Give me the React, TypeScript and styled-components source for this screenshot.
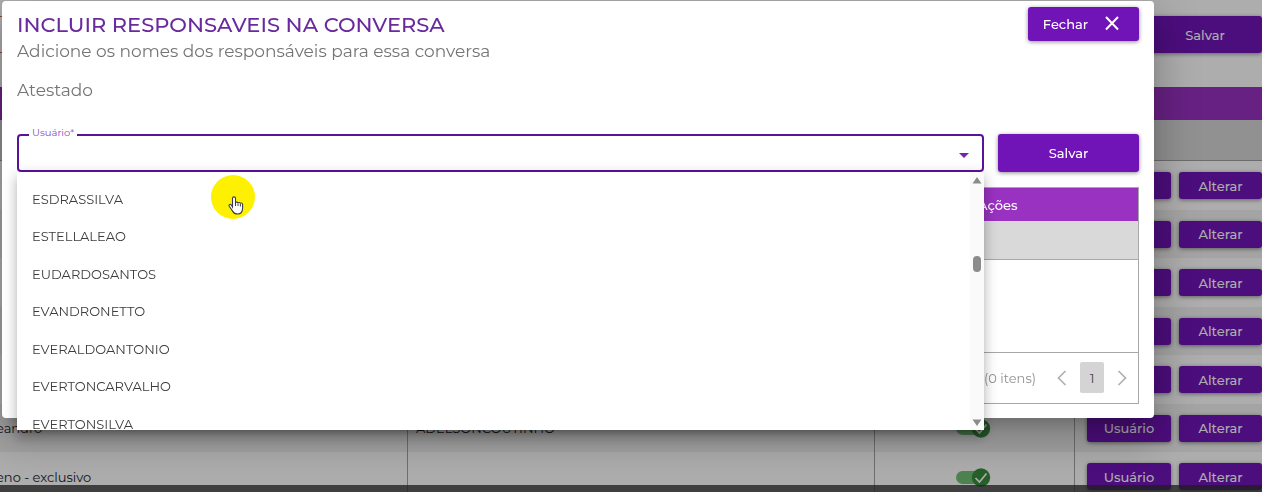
import React from "react";
import styled, { createGlobalStyle } from "styled-components";

const purple = "#7014b8";
const violet = "#9932c1";

const GlobalStyle = createGlobalStyle`
  *, *::before, *::after { box-sizing: border-box; }
  html, body { margin: 0; padding: 0; overflow: hidden; }
  body { background: #fff; }
  body, button, input { font-family: Montserrat, Inter, "Open Sans", sans-serif; }
`;

/* ---------- page behind the dialog ---------- */

const Page = styled.main`
  min-height: 100vh;
  overflow: hidden;
  color: #22222c;
`;

const FormBar = styled.div`
  display: flex;
  justify-content: space-between;
  align-items: flex-start;
  height: 87px;
  padding-top: 16px;
`;

const PageField = styled.input`
  width: 50%;
  height: 37px;
  border: 1px solid #e05a44;
  border-left: 0;
  background: #fff;
`;

const Button = styled.button<{ $width: number; $height: number }>`
  display: inline-flex;
  align-items: center;
  justify-content: center;
  flex: none;
  width: ${(p) => p.$width}px;
  height: ${(p) => p.$height}px;
  padding: 0;
  border: 0;
  border-radius: 3px;
  background: ${purple};
  color: #fff;
  font-size: 13px;
  font-weight: 500;
  line-height: 20px;
  box-shadow: 0 1px 4px rgba(0, 0, 0, 0.45);
  cursor: pointer;
`;

const PageTable = styled.table`
  width: 100%;
  table-layout: fixed;
  border-collapse: separate;
  border-spacing: 0;
  font-size: 13px;
  line-height: 20px;

  th { height: 33px; padding: 0; background: ${violet}; }
  thead tr + tr th { height: 41px; background: #d6d6d6; border-bottom: 1px solid #a0a0a0; }
  td { height: 49px; padding: 0; border-right: 1px solid #a4a4a4; white-space: nowrap; overflow: hidden; }
  tbody tr:nth-child(even) td { height: 48px; background: #f2f2f2; }
  td:first-child { text-indent: -4px; }
  td:nth-child(2) { padding-left: 8px; }
  td:last-child { border-right: 0; padding-left: 12px; }
`;

const RowActions = styled.div`
  display: flex;
  gap: 8px;
`;

const Switch = styled.label`
  display: flex;
  justify-content: center;
  margin-right: 2px;

  input { position: absolute; opacity: 0; }
  svg { display: block; }
`;

const Backdrop = styled.div`
  position: fixed;
  inset: 0;
  background: rgba(0, 0, 0, 0.32);
`;

const BottomBar = styled.div`
  position: fixed;
  inset: auto 0 0 0;
  height: 7px;
  background: rgba(32, 32, 32, 0.78);
`;

/* ---------- dialog ---------- */

const DialogLayer = styled.div`
  position: fixed;
  inset: 0;
  display: flex;
  align-items: flex-start;
  padding: 1px 108px 0 2px;
`;

const Dialog = styled.section`
  flex: 1;
  min-width: 0;
  padding: 6px 15px 14px;
  border-radius: 4px;
  background: #fff;
  box-shadow: 0 11px 15px -7px rgba(0, 0, 0, 0.2), 0 24px 38px 3px rgba(0, 0, 0, 0.14),
    0 9px 46px 8px rgba(0, 0, 0, 0.12);
`;

const DialogHeader = styled.header`
  display: flex;
  justify-content: space-between;
  align-items: flex-start;
`;

const Title = styled.h1`
  margin: 2px 0 0;
  color: #6a2a9e;
  font-size: 21px;
  font-weight: 500;
  line-height: 32px;
`;

const Subtitle = styled.p`
  margin: 0;
  color: #757575;
  font-size: 17px;
  line-height: 20px;
`;

const Topic = styled(Subtitle)`
  margin-top: 19px;
`;

const CloseButton = styled(Button)`
  gap: 16px;
  padding-right: 4px;
`;

const FormRow = styled.form`
  display: flex;
  gap: 14px;
  margin-top: 34px;
`;

const SelectField = styled.div`
  position: relative;
  flex: 1;
  min-width: 0;

  label {
    position: absolute;
    top: -8px;
    left: 12px;
    padding: 0 3px;
    background: #fff;
    color: #8a4cc2;
    font-size: 10px;
    line-height: 14px;
  }
  > svg { position: absolute; top: 19px; right: 15px; }
`;

const SelectInput = styled.input`
  display: block;
  width: 100%;
  height: 38px;
  padding: 0 40px 0 14px;
  border: 2px solid #5c1199;
  border-radius: 4px;
  outline: 0;
  background: #fff;
  font-size: 13px;
`;

const Panel = styled.div`
  position: absolute;
  top: 38px;
  left: 0;
  right: 0;
  z-index: 2;
  display: flex;
  height: 258px;
  overflow: hidden;
  background: #fff;
`;

const PanelShadow = styled.div`
  position: absolute;
  top: 38px;
  left: 0;
  right: 0;
  z-index: 1;
  height: 258px;
  box-shadow: 0 5px 5px -3px rgba(0, 0, 0, 0.2), 0 8px 10px 1px rgba(0, 0, 0, 0.14),
    0 3px 14px 2px rgba(0, 0, 0, 0.12);
`;

const Options = styled.ul`
  flex: 1;
  margin: 0;
  padding: 8px 0 0;
  list-style: none;
`;

const Option = styled.li`
  display: flex;
  align-items: center;
  height: 37px;
  padding-left: 15px;
  color: #3c3c3c;
  font-size: 13px;
  line-height: 20px;

  &:nth-child(even) { height: 38px; }
`;

const ScrollTrack = styled.div`
  display: flex;
  flex-direction: column;
  align-items: center;
  width: 14px;
  padding: 5px 0 4px;
  background: #fafafa;

  svg:last-child { margin-top: auto; }
`;

const ScrollThumb = styled.div`
  width: 8px;
  height: 16px;
  margin-top: 72px;
  border-radius: 4px;
  background: #8b8b8b;
`;

const Grid = styled.div`
  margin-top: 15px;
  border: 1px solid #a8a8a8;
`;

const GridTable = styled.table`
  width: 100%;
  table-layout: fixed;
  border-collapse: collapse;

  th {
    height: 33px;
    padding: 0;
    background: ${violet};
    color: #fff;
    font-size: 13px;
    font-weight: 500;
    text-align: left;
  }
  thead tr + tr th { height: 38px; background: #d9d9d9; border-bottom: 1px solid #a8a8a8; }
  td { height: 93px; border-bottom: 1px solid #a8a8a8; }
`;

const Pager = styled.nav`
  display: flex;
  align-items: center;
  justify-content: flex-end;
  height: 50px;
  padding-right: 4px;
  color: #929292;
  font-size: 13px;
  line-height: 20px;
`;

const PagerButton = styled.button<{ $current?: boolean }>`
  display: flex;
  align-items: center;
  justify-content: center;
  width: 24px;
  height: 31px;
  padding: 0;
  border: 0;
  border-radius: 2px;
  background: ${(p) => (p.$current ? "#d4d4d4" : "transparent")};
  color: ${(p) => (p.$current ? "#444" : "#b0b0b0")};
  font-size: 13px;
`;

const PagerList = styled.div`
  display: flex;
  gap: 6px;
  margin-left: 14px;
`;

const Pointer = styled.div`
  position: fixed;
  top: 175px;
  left: 211px;
  z-index: 3;
  pointer-events: none;

  svg { display: block; }
`;

const rows = [
  { name: "", user: "" },
  { name: "", user: "" },
  { name: "", user: "" },
  { name: "", user: "" },
  { name: "", user: "" },
  { name: "eandro", user: "ADELSONCOUTINHO" },
  { name: "eno - exclusivo", user: "" },
];

const options = [
  "ESDRASSILVA",
  "ESTELLALEAO",
  "EUDARDOSANTOS",
  "EVANDRONETTO",
  "EVERALDOANTONIO",
  "EVERTONCARVALHO",
  "EVERTONSILVA",
];

function Toggle() {
  return (
    <Switch>
      <input type="checkbox" defaultChecked aria-label="Ativo" />
      <svg width="35" height="20" viewBox="0 0 35 20">
        <rect x="0" y="4" width="32" height="13" rx="6.5" fill="#73c278" />
        <circle cx="25" cy="10.5" r="9.2" fill="#388e3c" />
        <path d="M19.5 11l4 4 7-8.5" fill="none" stroke="#fff" strokeWidth="1.7" />
      </svg>
    </Switch>
  );
}

function Chevron({ d }: { d: string }) {
  return (
    <svg width="10" height="16" viewBox="0 0 10 16" fill="none" stroke="currentColor" strokeWidth="1.7">
      <path d={d} />
    </svg>
  );
}

export default function App() {
  return (
    <>
      <GlobalStyle />
      <Page>
        <FormBar>
          <PageField aria-label="Nome" />
          <Button $width={114} $height={37}>Salvar</Button>
        </FormBar>
        <PageTable>
          <colgroup>
            <col style={{ width: 408 }} />
            <col />
            <col style={{ width: 200 }} />
            <col style={{ width: 187 }} />
          </colgroup>
          <thead>
            <tr><th colSpan={4} /></tr>
            <tr><th colSpan={4} /></tr>
          </thead>
          <tbody>
            {rows.map((row, i) => (
              <tr key={i}>
                <td>{row.name}</td>
                <td>{row.user}</td>
                <td><Toggle /></td>
                <td>
                  <RowActions>
                    <Button $width={84} $height={27}>Usuário</Button>
                    <Button $width={83} $height={27}>Alterar</Button>
                  </RowActions>
                </td>
              </tr>
            ))}
          </tbody>
        </PageTable>
      </Page>
      <Backdrop />
      <DialogLayer>
        <Dialog role="dialog" aria-labelledby="dialog-title">
          <DialogHeader>
            <div>
              <Title id="dialog-title">INCLUIR RESPONSAVEIS NA CONVERSA</Title>
              <Subtitle>Adicione os nomes dos responsáveis para essa conversa</Subtitle>
              <Topic>Atestado</Topic>
            </div>
            <CloseButton $width={111} $height={34}>
              Fechar
              <svg width="16" height="16" viewBox="0 0 16 16" stroke="#fff" strokeWidth="2">
                <path d="M2 1L14 13.500M14 1L2 13.500" />
              </svg>
            </CloseButton>
          </DialogHeader>
          <FormRow onSubmit={(e) => e.preventDefault()}>
            <SelectField>
              <SelectInput id="usuario" role="combobox" aria-expanded="true" aria-controls="usuarios" />
              <label htmlFor="usuario">Usuário*</label>
              <svg width="10" height="5" viewBox="0 0 10 5"><path d="M0 0h10L5 5z" fill="#7424b4" /></svg>
              <PanelShadow />
              <Panel>
                <Options id="usuarios" role="listbox">
                  {options.map((name) => (
                    <Option key={name} role="option">{name}</Option>
                  ))}
                </Options>
                <ScrollTrack>
                  <svg width="10" height="7" viewBox="0 0 10 7"><path d="M5 0L9.500 6.500h-9z" fill="#8b8b8b" /></svg>
                  <ScrollThumb />
                  <svg width="10" height="7" viewBox="0 0 10 7"><path d="M5 7L9.500 0.500h-9z" fill="#8b8b8b" /></svg>
                </ScrollTrack>
              </Panel>
            </SelectField>
            <Button $width={141} $height={38}>Salvar</Button>
          </FormRow>
          <Grid>
            <GridTable>
              <colgroup>
                <col />
                <col style={{ width: 160 }} />
              </colgroup>
              <thead>
                <tr><th /><th>Ações</th></tr>
                <tr><th colSpan={2} /></tr>
              </thead>
              <tbody>
                <tr><td colSpan={2} /></tr>
              </tbody>
            </GridTable>
            <Pager aria-label="Paginação">
              <span>(0 itens)</span>
              <PagerList>
                <PagerButton aria-label="Anterior"><Chevron d="M8.500 1L1.500 8l7 7" /></PagerButton>
                <PagerButton $current>1</PagerButton>
                <PagerButton aria-label="Próxima"><Chevron d="M1.500 1l7 7-7 7" /></PagerButton>
              </PagerList>
            </Pager>
          </Grid>
        </Dialog>
      </DialogLayer>
      <Pointer>
        <svg width="44" height="44" viewBox="0 0 44 44">
          <circle cx="22" cy="22" r="22" fill="#fdf000" />
          <path
            d="M21.500 32V23.500c0-2.200 3-2.200 3 0v4.700c0-1.400 2.500-1.400 2.500.1 0-1.200 2.400-1.200 2.400.4 0-1.100 2.200-1 2.200.7v3.600c0 4-1.600 6-5 6-2.600 0-3.900-1-5-2.900l-3.400-4.800c-.9-1.500.9-2.500 2-1.500z"
            fill="#fff" stroke="#3a3a4a" strokeWidth="1.1"
          />
          <path d="M24.500 28v3M27 28.500v2.500M29.400 29V31.500" stroke="#3a3a4a" strokeWidth="1" />
        </svg>
      </Pointer>
      <BottomBar />
    </>
  );
}
